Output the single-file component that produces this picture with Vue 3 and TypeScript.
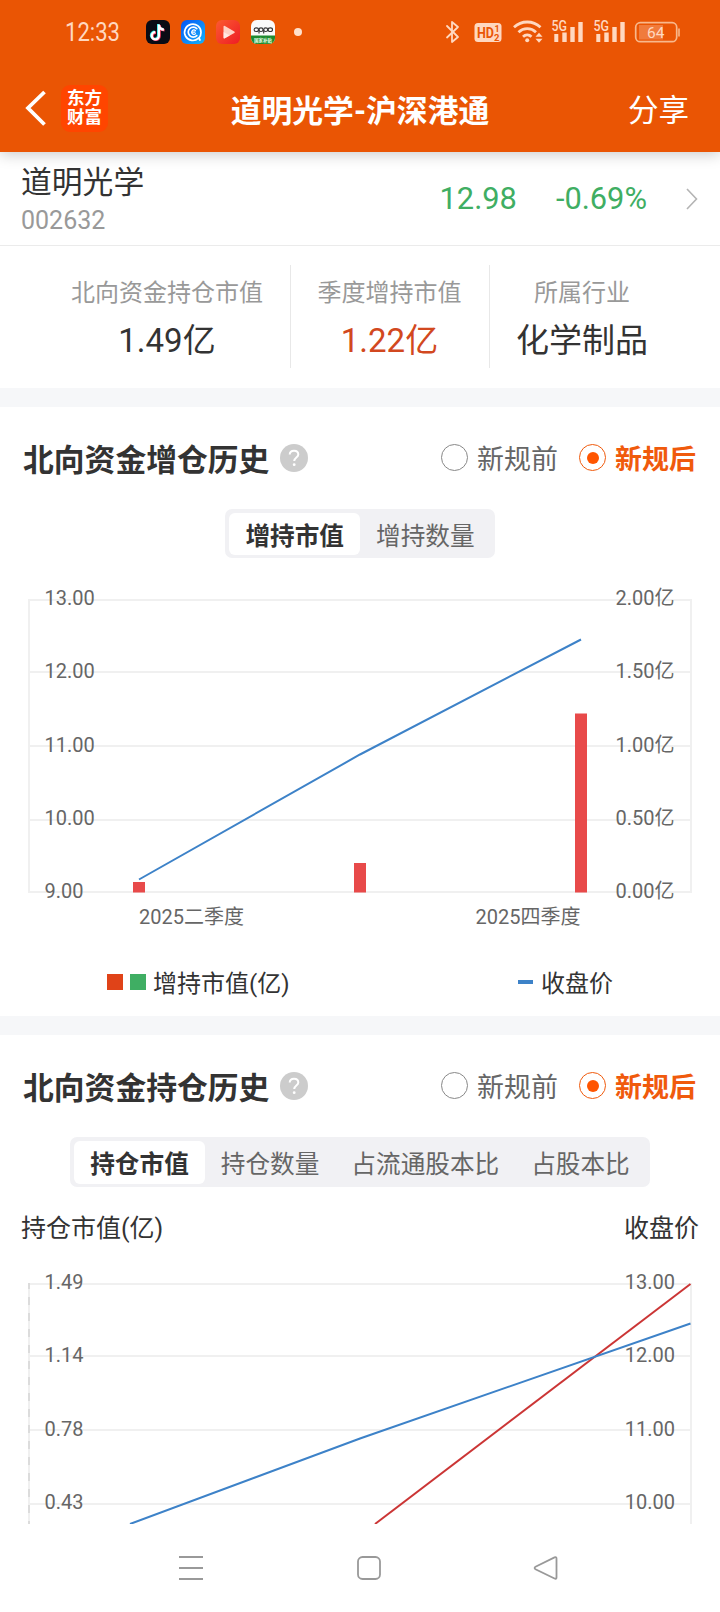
<script setup lang="ts">
import { ref } from 'vue'

interface Tick { y: number; base: number; left: string; right: string }
interface Stat { label: string; value: string; tone: string }

const stats: Stat[] = [
  { label: '北向资金持仓市值', value: '1.49亿', tone: 'dark' },
  { label: '季度增持市值', value: '1.22亿', tone: 'red' },
  { label: '所属行业', value: '化学制品', tone: 'dark' },
]

const rules: string[] = ['新规前', '新规后']
const rule = ref<number[]>([1, 1])

const addTabs: string[] = ['增持市值', '增持数量']
const addTab = ref(0)
const holdTabs: string[] = ['持仓市值', '持仓数量', '占流通股本比', '占股本比']
const holdTab = ref(0)

const addTicks: Tick[] = [
  { y: 10, base: 15, left: '13.00', right: '2.00亿' },
  { y: 82, base: 88, left: '12.00', right: '1.50亿' },
  { y: 156, base: 162, left: '11.00', right: '1.00亿' },
  { y: 230, base: 235, left: '10.00', right: '0.50亿' },
  { y: 302, base: 308, left: '9.00', right: '0.00亿' },
]
const bars = [
  { x: 133, top: 292 },
  { x: 354, top: 273 },
  { x: 575, top: 123.5 },
]
const holdTicks: Tick[] = [
  { y: 14, base: 19, left: '1.49', right: '13.00' },
  { y: 86, base: 92, left: '1.14', right: '12.00' },
  { y: 160, base: 166, left: '0.78', right: '11.00' },
  { y: 234, base: 239, left: '0.43', right: '10.00' },
]
</script>

<template>
  <div class="screen">
    <header class="header">
      <div class="status">
        <svg class="clock" width="64" height="44" viewBox="0 -8 64 44">
          <text x="1" y="23" font-size="25" textLength="55" lengthAdjust="spacingAndGlyphs">12:33</text>
        </svg>
        <div class="apps">
          <svg width="24" height="24" viewBox="0 0 24 24">
            <rect width="24" height="24" rx="6" fill="#0b0b14" />
            <g fill="none" stroke-width="2.4">
              <path d="M12.200 4v11.300a3.600 3.600 0 1 1-3.600-3.600M12.200 4.500c.3 2.600 2.300 4.500 5 4.700" stroke="#25e8e4" />
              <path d="M13.600 5v11.300a3.600 3.600 0 1 1-3.600-3.600M13.600 5.500c.3 2.600 2.300 4.500 5 4.700" stroke="#f7335c" />
              <path d="M12.900 4.500v11.300a3.600 3.600 0 1 1-3.600-3.600M12.900 5c.3 2.600 2.300 4.500 5 4.700" stroke="#fff" stroke-width="2.300" />
            </g>
          </svg>
          <svg width="24" height="24" viewBox="0 0 24 24">
            <defs>
              <linearGradient id="blue" x1="0" y1="0" x2="1" y2="1">
                <stop offset="0" stop-color="#0754f5" />
                <stop offset="1" stop-color="#13b4fb" />
              </linearGradient>
            </defs>
            <rect width="24" height="24" rx="6" fill="url(#blue)" />
            <g fill="none" stroke="#fff" stroke-linecap="round">
              <path d="M17.500 18.200A8.200 8.200 0 1 1 20 12.500c0 2.500-.8 4.200-2 5.500l1 2" stroke-width="1.700" />
              <path d="M15.800 8.600A5 5 0 1 0 15.800 15.600" stroke-width="1.700" />
              <path d="M14.500 10.700a2.200 2.200 0 1 0 0 2.900M11 12.100h3" stroke-width="1.200" />
            </g>
          </svg>
          <svg width="24" height="24" viewBox="0 0 24 24">
            <defs>
              <linearGradient id="red" x1="0" y1="0" x2="1" y2="1">
                <stop offset="0" stop-color="#fb5a31" />
                <stop offset="1" stop-color="#ee1c24" />
              </linearGradient>
            </defs>
            <rect width="24" height="24" rx="6" fill="url(#red)" />
            <path d="M7.500 6.800v10.600q0 1.600 1.400.9l9.400-5.300q1.200-.8 0-1.600L8.900 6q-1.400-.8-1.400.8z" fill="#ffd2c6" />
            <path d="M7.500 12.100v5.300q0 1.600 1.400.9l5-2.800z" fill="#fff" opacity=".55" />
          </svg>
          <svg width="24" height="24" viewBox="0 0 24 24">
            <defs><clipPath id="round"><rect width="24" height="24" rx="6" /></clipPath></defs>
            <g clip-path="url(#round)">
              <rect width="24" height="24" fill="#fafafa" />
              <rect y="15.500" width="24" height="9" fill="#1e8a2e" />
            </g>
            <g fill="none" stroke="#333" stroke-width="1.100">
              <ellipse cx="5.300" cy="9.700" rx="2.200" ry="1.800" />
              <ellipse cx="10" cy="9.700" rx="2" ry="1.800" />
              <ellipse cx="14.700" cy="9.700" rx="2" ry="1.800" />
              <ellipse cx="19.300" cy="9.700" rx="2.200" ry="1.800" />
              <path d="M8 9.500v4M12.700 9.500v4" />
            </g>
            <text class="subsidy" x="12" y="21.800" text-anchor="middle">国家补贴</text>
          </svg>
        </div>
        <i class="dot"></i>
        <svg class="indicators" width="236" height="28" viewBox="0 0 236 28">
          <path d="M3 8l11 11-6 5V4l6 5L3 19.500" fill="none" stroke="#ffd8c0" stroke-width="1.800" stroke-linejoin="round" stroke-linecap="round" />
          <rect x="30.500" y="5" width="27" height="19" rx="3.500" fill="#ffd8c0" />
          <text class="badge" x="33" y="19.800" font-size="14" textLength="17" lengthAdjust="spacingAndGlyphs">HD</text>
          <text class="badge" x="50.500" y="14" font-size="9">1</text>
          <text class="badge" x="50" y="22.500" font-size="9.500">2</text>
          <g fill="none" stroke="#ffd8c0" stroke-width="2.800">
            <path d="M70 9.200a19.500 19.500 0 0 1 26.500 0" />
            <path d="M74.500 14.200a12.700 12.700 0 0 1 17.500 0" />
            <path d="M79 18.700a6.200 6.200 0 0 1 8.500 0" />
          </g>
          <circle cx="83.200" cy="22.300" r="2" fill="#ffd8c0" />
          <path d="M95 14.800l3.500 4h-7zM95 24.800l3.500-4h-7z" fill="#ffd8c0" />
          <g fill="#ffd8c0">
            <text x="107.500" y="13.200" font-size="14" font-weight="500" textLength="15.500" lengthAdjust="spacingAndGlyphs">5G</text>
            <path d="M110.300 16h4v8h-4zM118.300 14.500h4.400v9.500h-4.400zM126.300 9h4.400v15h-4.400zM134.300 4h4.400v20h-4.400z" />
            <text x="149.500" y="13.200" font-size="14" font-weight="500" textLength="15.500" lengthAdjust="spacingAndGlyphs">5G</text>
            <path d="M152.300 16h4v8h-4zM160.300 14.500h4.400v9.500h-4.400zM168.300 9h4.400v15h-4.400zM176.300 4h4.400v20h-4.400z" />
          </g>
          <rect x="191.700" y="4.700" width="41" height="19" rx="4.500" fill="none" stroke="#f8b88c" stroke-width="1.700" />
          <path d="M195 7h24v14.500h-24z" fill="#f07b3c" />
          <path d="M235 10.500v8" stroke="#f8b88c" stroke-width="1.600" />
          <text x="203" y="20.300" font-size="15.500" fill="#ffd8c0">64</text>
        </svg>
      </div>
      <nav class="topbar">
        <div class="side">
          <svg width="24" height="38" viewBox="0 0 24 38">
            <path d="M20.500 3L4 19l16.500 16.500" fill="none" stroke="#fff" stroke-width="3.800" />
          </svg>
          <div class="logo"><span>东方</span><span>财富</span></div>
        </div>
        <h1>道明光学-沪深港通</h1>
        <span class="share">分享</span>
      </nav>
    </header>

    <section class="quote">
      <div class="ident">
        <span class="name">道明光学</span>
        <span class="code">002632</span>
      </div>
      <span class="num price">12.98</span>
      <span class="num change">-0.69%</span>
      <svg width="14" height="24" viewBox="0 0 14 24">
        <path d="M2 2l9.500 10L2 22" fill="none" stroke="#b4b4b4" stroke-width="1.600" />
      </svg>
    </section>

    <section class="stats">
      <div v-for="s in stats" :key="s.label" class="stat">
        <span class="label">{{ s.label }}</span>
        <span class="value" :class="s.tone">{{ s.value }}</span>
      </div>
    </section>

    <div class="band"></div>

    <section class="card first">
      <div class="title">
        <h2>北向资金增仓历史</h2>
        <svg class="help" width="28" height="28" viewBox="0 0 28 28">
          <circle cx="14" cy="14" r="14" fill="#ccc" />
          <path d="M9.700 10.500c.2-5.200 8.600-5 8.600-.1 0 3.200-4.100 3-4.100 6.700" fill="none" stroke="#fff" stroke-width="2" />
          <circle cx="14.200" cy="20.700" r="1.400" fill="#fff" />
        </svg>
        <div class="radios">
          <label v-for="(r, i) in rules" :key="r" :class="{ on: rule[0] === i }" @click="rule[0] = i"><i></i>{{ r }}</label>
        </div>
      </div>
      <div class="tabs">
        <span v-for="(t, i) in addTabs" :key="t" :class="{ on: addTab === i }" @click="addTab = i">{{ t }}</span>
      </div>
      <svg class="chart" width="720" height="365" viewBox="0 -15 720 365">
        <path v-for="t in addTicks" :key="t.y" :d="`M28 ${t.y}H692`" class="grid" />
        <path d="M29 9V303M691 9V303" class="grid" />
        <rect v-for="b in bars" :key="b.x" :x="b.x" :y="b.top" width="12" :height="302.500 - b.top" fill="#e84a4a" />
        <polyline points="139,289.500 360,164.500 581,49.500" class="line blue" />
        <g class="axis">
          <template v-for="t in addTicks" :key="t.y">
            <text x="44.500" :y="t.base">{{ t.left }}</text>
            <text x="674.500" :y="t.base" text-anchor="end">{{ t.right }}</text>
          </template>
          <text x="139" y="334">2025二季度</text>
          <text x="580.500" y="334" text-anchor="end">2025四季度</text>
        </g>
      </svg>
      <div class="legend">
        <span class="key"><i class="sq red"></i><i class="sq green"></i>增持市值(亿)</span>
        <span class="key"><i class="dash"></i>收盘价</span>
      </div>
    </section>

    <div class="band"></div>

    <section class="card second">
      <div class="title">
        <h2>北向资金持仓历史</h2>
        <svg class="help" width="28" height="28" viewBox="0 0 28 28">
          <circle cx="14" cy="14" r="14" fill="#ccc" />
          <path d="M9.700 10.500c.2-5.200 8.600-5 8.600-.1 0 3.200-4.100 3-4.100 6.700" fill="none" stroke="#fff" stroke-width="2" />
          <circle cx="14.200" cy="20.700" r="1.400" fill="#fff" />
        </svg>
        <div class="radios">
          <label v-for="(r, i) in rules" :key="r" :class="{ on: rule[1] === i }" @click="rule[1] = i"><i></i>{{ r }}</label>
        </div>
      </div>
      <div class="tabs">
        <span v-for="(t, i) in holdTabs" :key="t" :class="{ on: holdTab === i }" @click="holdTab = i">{{ t }}</span>
      </div>
      <div class="captions"><span>持仓市值(亿)</span><span>收盘价</span></div>
      <svg class="chart" width="720" height="269" viewBox="0 -15 720 269">
        <path v-for="t in holdTicks" :key="t.y" :d="`M28 ${t.y}H692`" class="grid" />
        <path d="M29 13V254M691 13V254" class="grid" />
        <path d="M29 13V254" stroke="#dcdcdc" stroke-width="2" stroke-dasharray="8 8" stroke-dashoffset="2" />
        <polyline points="375,254 690.500,14" class="line crimson" />
        <polyline points="130,254 360,168.500 690.500,53.500" class="line blue" />
        <g class="axis">
          <template v-for="t in holdTicks" :key="t.y">
            <text x="44.500" :y="t.base">{{ t.left }}</text>
            <text x="675" :y="t.base" text-anchor="end">{{ t.right }}</text>
          </template>
        </g>
      </svg>
    </section>

    <footer class="sysnav">
      <svg width="26" height="26" viewBox="0 0 26 26"><path d="M1 2h24M1 13h24M1 24h24" /></svg>
      <svg width="26" height="26" viewBox="0 0 26 26"><rect x="2" y="2" width="22" height="22" rx="4.500" /></svg>
      <svg width="26" height="26" viewBox="0 0 26 26"><path d="M2.500 11.800L21.500 2.400q2-.7 2 1v19q0 1.900-2 1.100L2.500 14.200q-1.800-1.200 0-2.400z" /></svg>
    </footer>
  </div>
</template>

<style>
body {
  background: #fff;
}
</style>

<style scoped>
.screen {
  width: 720px;
  height: 1612px;
  overflow: hidden;
  display: flex;
  flex-direction: column;
  background: #fff;
  color: #333;
  font-family: Roboto, "Noto Sans CJK SC", sans-serif;
}
svg {
  display: block;
  flex: none;
}
h1,
h2 {
  margin: 0;
  font-size: 30.8px;
  font-weight: 700;
  white-space: nowrap;
}
.header {
  flex: none;
  position: relative;
  height: 152px;
  background: #ea5504;
  color: #fff;
  box-shadow: 0 2px 14px rgba(0, 0, 0, 0.22);
}
.status {
  display: flex;
  align-items: center;
  height: 64px;
  padding-left: 64px;
}
.clock {
  fill: #ffd8c0;
}
.apps {
  display: flex;
  gap: 11px;
  margin-left: 18px;
}
.subsidy {
  font-size: 4.5px;
  font-weight: 700;
  fill: #e6ffe6;
}
.dot {
  width: 8px;
  height: 8px;
  margin-left: 19px;
  border-radius: 50%;
  background: #ffe0cc;
}
.indicators {
  margin-left: 142px;
}
.badge {
  font-weight: 700;
  fill: #ea5504;
}
.topbar {
  display: grid;
  grid-template-columns: 1fr auto 1fr;
  align-items: center;
  height: 88px;
  padding: 0 30px 2px 24px;
}
.side {
  display: flex;
  align-items: center;
  gap: 13px;
}
.logo {
  display: flex;
  flex-direction: column;
  align-items: center;
  justify-content: center;
  width: 47px;
  height: 47px;
  border-radius: 9px;
  background: #ff4500;
  font-size: 17.5px;
  font-weight: 700;
  line-height: 19px;
}
.topbar h1 {
  margin-left: 6px;
}
.share {
  justify-self: end;
  margin-right: 1px;
  font-size: 30.5px;
}
.quote {
  flex: none;
  display: flex;
  align-items: center;
  box-sizing: border-box;
  height: 94px;
  padding: 0 21px 0 21px;
  border-bottom: 1px solid #ebebeb;
}
.ident {
  display: flex;
  flex-direction: column;
  flex: 1;
  padding-top: 5px;
}
.name {
  font-size: 30.8px;
  line-height: 40px;
}
.code {
  font-size: 25px;
  line-height: 36px;
  color: #999;
}
.num {
  font-size: 30.8px;
  color: #3fae63;
}
.change {
  margin: 0 38px 0 39px;
}
.stats {
  flex: none;
  display: flex;
  height: 103px;
  padding: 19px 44px 20px;
}
.stat {
  display: flex;
  flex-direction: column;
  align-items: center;
  flex: none;
  padding: 10px 27px 0;
}
.stat + .stat {
  border-left: 1px solid #e8e8e8;
  padding-left: 26.5px;
}
.label {
  font-size: 24px;
  line-height: 36px;
  color: #999;
}
.value {
  margin-top: 6px;
  font-size: 33px;
  line-height: 48px;
}
.value.red {
  color: #d24820;
}
.band {
  flex: none;
  height: 19px;
  background: #f6f7f9;
}
.card {
  flex: none;
  display: flex;
  flex-direction: column;
}
.first {
  height: 609px;
}
.second {
  height: 489px;
}
.title {
  flex: none;
  display: flex;
  align-items: center;
  height: 102px;
  padding: 0 24px 0 23px;
}
.title h2 {
  padding-bottom: 2px;
}
.help {
  margin-left: 10.5px;
}
.radios {
  display: flex;
  gap: 21px;
  margin-left: auto;
  padding-bottom: 1px;
}
.radios label {
  display: flex;
  align-items: center;
  font-size: 27px;
  color: #666;
}
.radios i {
  display: flex;
  box-sizing: border-box;
  width: 27px;
  height: 27px;
  margin-right: 9px;
  border: 1px solid #888;
  border-radius: 50%;
}
.radios .on {
  color: #f05a0c;
  font-weight: 700;
}
.radios .on i {
  border-color: #f05a0c;
}
.radios .on i::after {
  content: "";
  width: 12px;
  height: 12px;
  margin: auto;
  border-radius: 50%;
  background: #ff5500;
}
.tabs {
  flex: none;
  display: flex;
  align-self: center;
  box-sizing: border-box;
  height: 49px;
  padding: 4px 4px 3px;
  border-radius: 7px;
  background: #f1f1f4;
}
.second .tabs {
  height: 50px;
}
.tabs span {
  padding: 0 16px;
  border-radius: 6px;
  font-size: 24.65px;
  line-height: 47px;
  color: #666;
}
.tabs .on {
  background: #fff;
  color: #333;
  font-weight: 700;
}
.first .chart {
  margin-top: 17px;
}
.grid {
  stroke: #f0f0f0;
  stroke-width: 2;
}
.line {
  fill: none;
  stroke-width: 2;
}
.blue {
  stroke: #3d82c8;
}
.crimson {
  stroke: #cb3535;
}
.axis {
  font-size: 20px;
  fill: #666;
}
.legend {
  flex: none;
  display: grid;
  grid-template-columns: 396px 1fr;
  align-items: center;
  box-sizing: border-box;
  height: 69px;
  padding: 14px 0 0 107px;
  font-size: 24px;
}
.legend .key:last-child {
  padding-left: 15px;
}
.key {
  display: flex;
  align-items: center;
}
.sq {
  width: 16px;
  height: 16px;
  margin-right: 7px;
}
.sq.red {
  background: #e04318;
}
.sq.green {
  background: #3fae63;
}
.dash {
  width: 15px;
  height: 4px;
  margin-right: 8px;
  background: #3d82c8;
}
.captions {
  flex: none;
  display: flex;
  justify-content: space-between;
  height: 68px;
  padding: 0 21px;
  font-size: 25px;
  line-height: 83px;
}
.sysnav {
  flex: 1;
  display: flex;
  padding: 31px 0 0 178px;
  gap: 151.5px;
}
.sysnav svg {
  fill: none;
  stroke: #999;
  stroke-width: 1.8;
}
</style>
